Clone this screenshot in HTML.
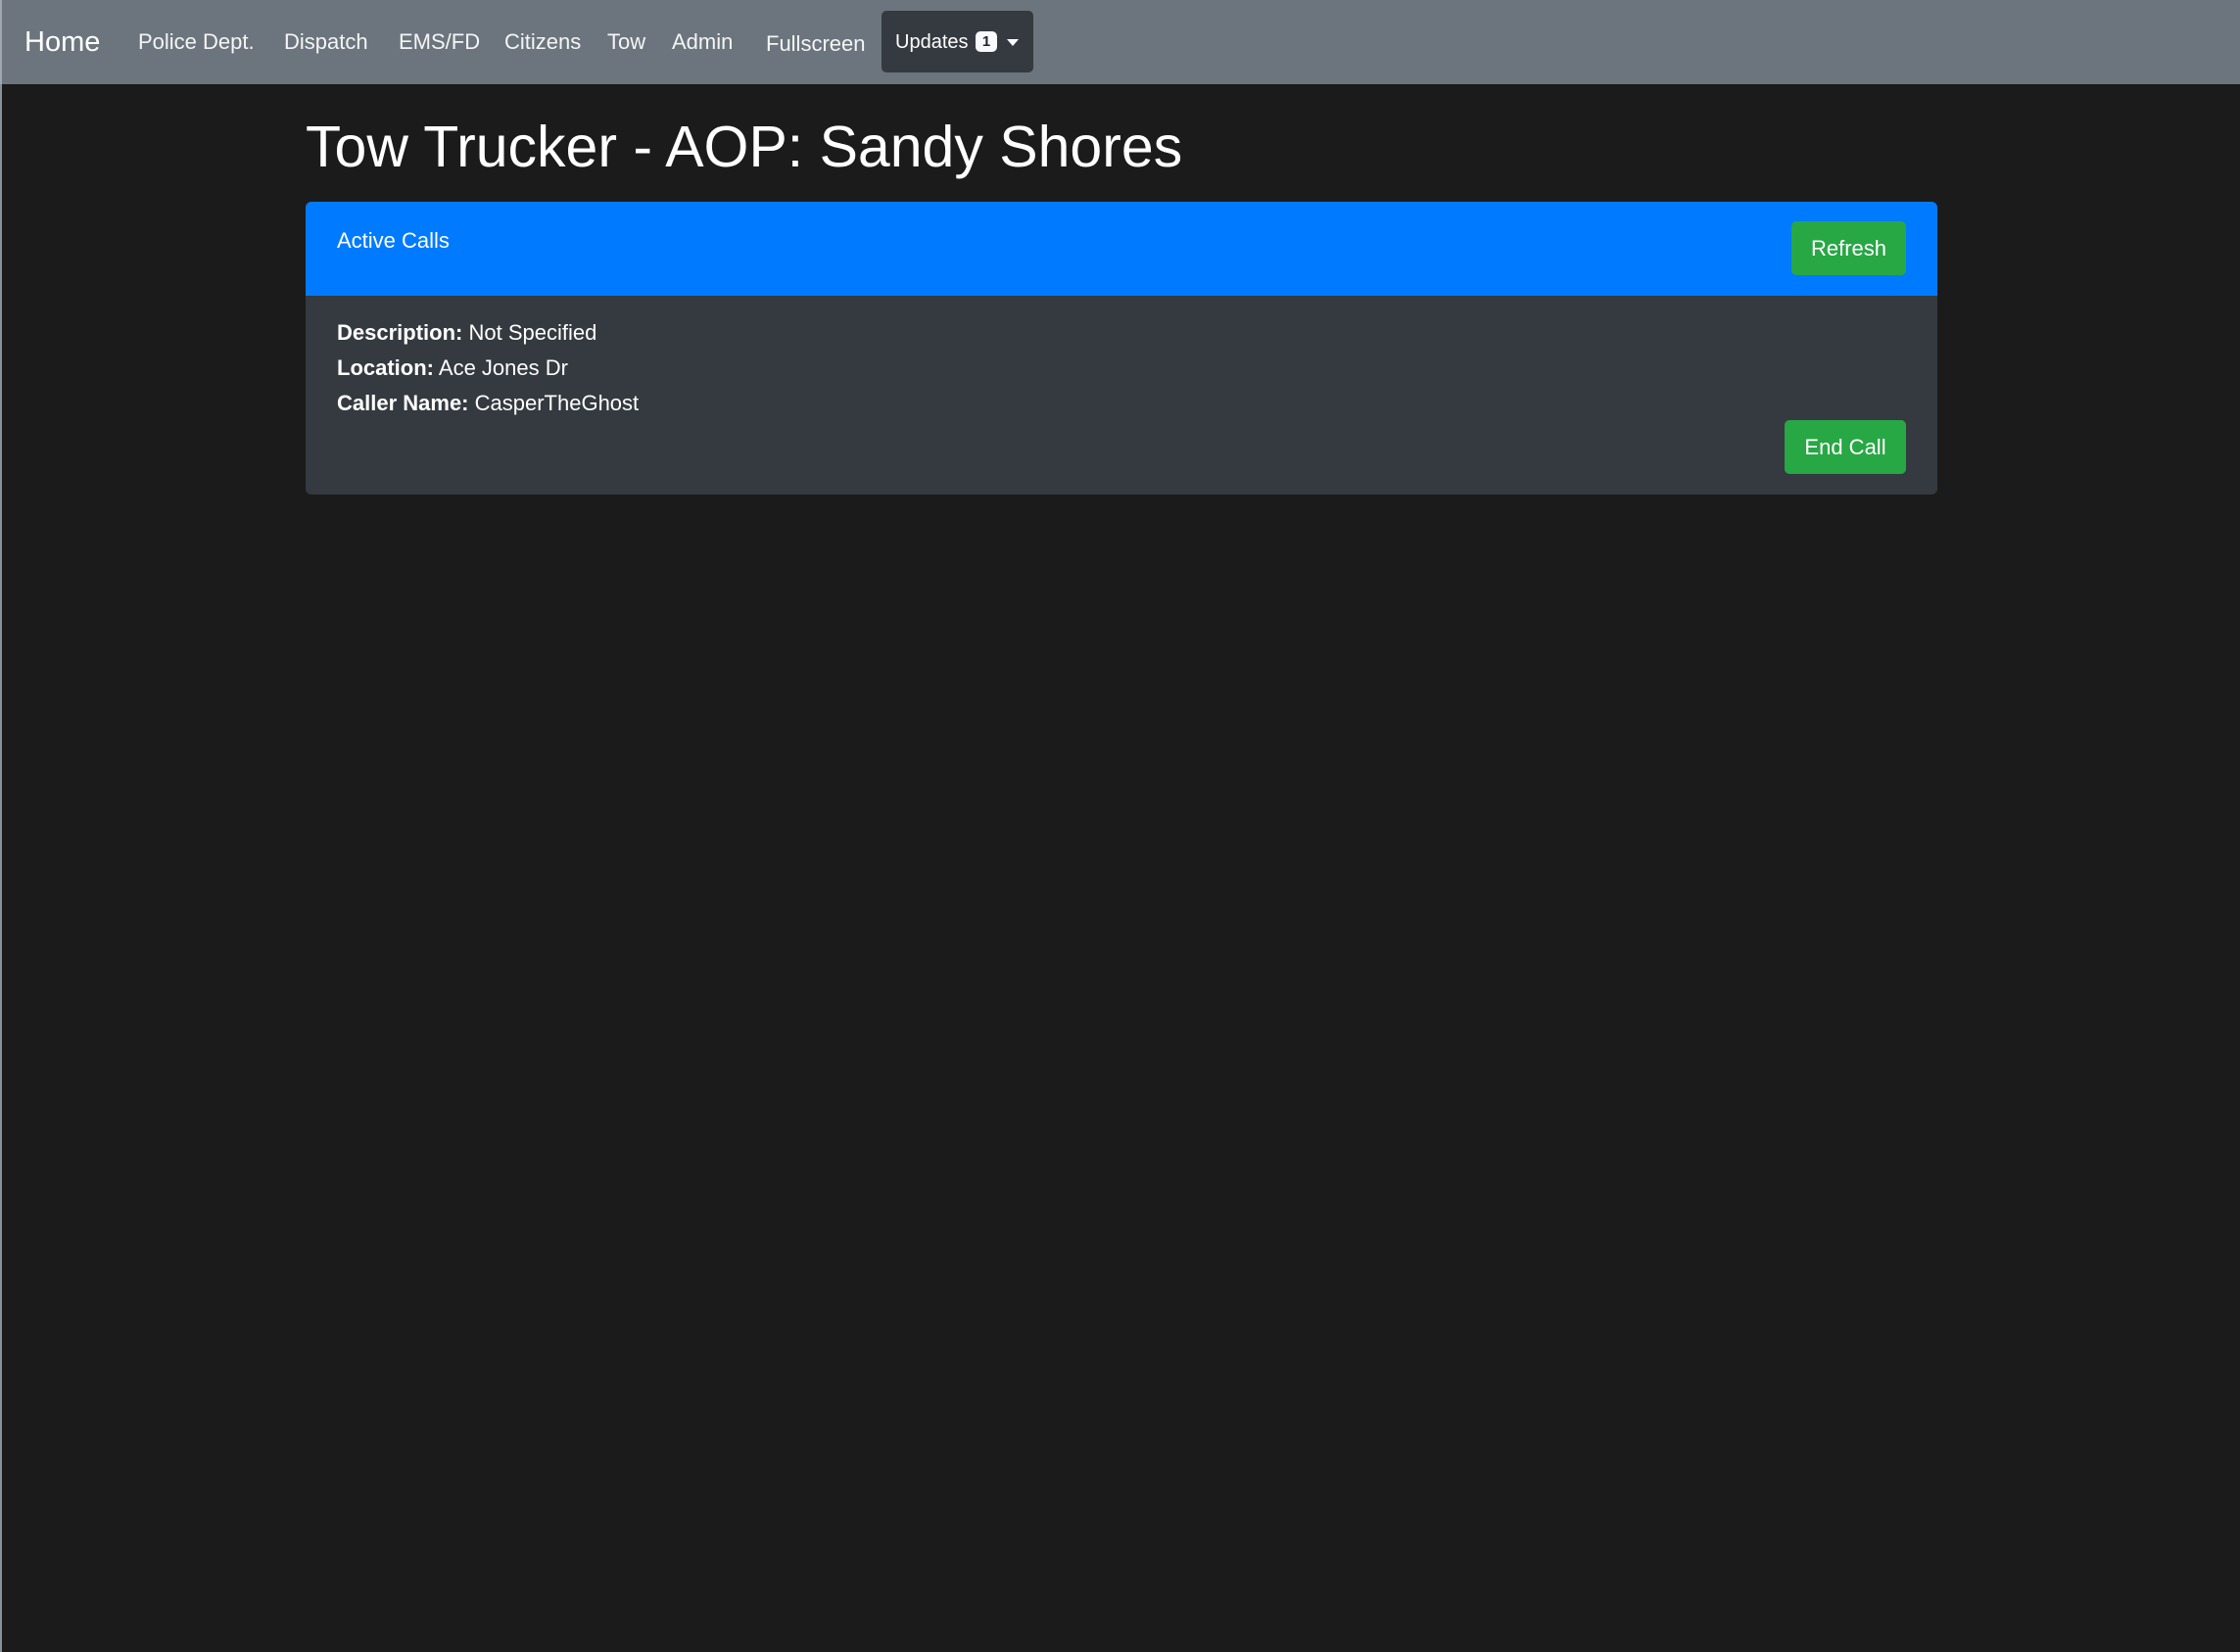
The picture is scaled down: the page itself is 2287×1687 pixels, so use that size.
<!DOCTYPE html>
<html><head><meta charset="utf-8"><style>
*{margin:0;padding:0;box-sizing:border-box}
body{width:2287px;height:1687px;background:#1b1b1b;font-family:"Liberation Sans",sans-serif;color:#fff;position:relative;overflow:hidden}
.bl{position:absolute;left:0;top:0;width:2px;height:1687px;background:#8a9199}
.nav{position:absolute;left:0;top:0;width:2287px;height:86px;background:#6c757d}
.t{position:absolute;white-space:nowrap;line-height:1}
.nl{font-size:22px;top:32px;color:#f4f5f6}
.upd{position:absolute;left:900px;top:11px;width:155px;height:63px;background:#343a40;border-radius:5px}
.badge{position:absolute;left:96px;top:21px;width:22px;height:21px;background:#f8f9fa;border-radius:5px;color:#212529;font-size:15px;font-weight:bold;text-align:center;line-height:21px}
.caret{position:absolute;left:128px;top:29px;width:0;height:0;border-left:6px solid transparent;border-right:6px solid transparent;border-top:7px solid #fff}
.card{position:absolute;left:312px;top:206px;width:1666px;height:299px;background:#343a40;border-radius:6px;overflow:hidden}
.hdr{position:absolute;left:0;top:0;width:100%;height:96px;background:#007bff}
.btn{position:absolute;background:#28a745;border-radius:5px;color:#fff;font-size:22px;text-align:center}
.ln{position:absolute;left:32px;font-size:22px;white-space:nowrap}
</style></head><body>
<div class="bl"></div>
<div class="nav">
<div class="t" style="left:25px;top:29px;font-size:29px;color:#fff">Home</div>
<div class="t nl" style="left:141px">Police Dept.</div>
<div class="t nl" style="left:290px">Dispatch</div>
<div class="t nl" style="left:407px">EMS/FD</div>
<div class="t nl" style="left:515px">Citizens</div>
<div class="t nl" style="left:620px">Tow</div>
<div class="t nl" style="left:686px">Admin</div>
<div class="t nl" style="left:782px;top:34px">Fullscreen</div>
<div class="upd"><div class="t" style="left:14px;top:22px;font-size:20px">Updates</div><div class="badge">1</div><div class="caret"></div></div>
</div>
<div class="bl" style="background:#a0a6ad;height:86px"></div>
<div class="t" style="left:312px;top:121px;font-size:59px;color:#fff">Tow Trucker - AOP: Sandy Shores</div>
<div class="card">
<div class="hdr">
<div class="t" style="left:32px;top:29px;font-size:22px">Active Calls</div>
<div class="btn" style="left:1517px;top:20px;width:117px;height:55px;line-height:55px">Refresh</div>
</div>
<div class="ln" style="top:121px"><b>Description:</b> Not Specified</div>
<div class="ln" style="top:157px"><b>Location:</b> Ace Jones Dr</div>
<div class="ln" style="top:193px"><b>Caller Name:</b> CasperTheGhost</div>
<div class="btn" style="left:1510px;top:223px;width:124px;height:55px;line-height:55px">End Call</div>
</div>
</body></html>
